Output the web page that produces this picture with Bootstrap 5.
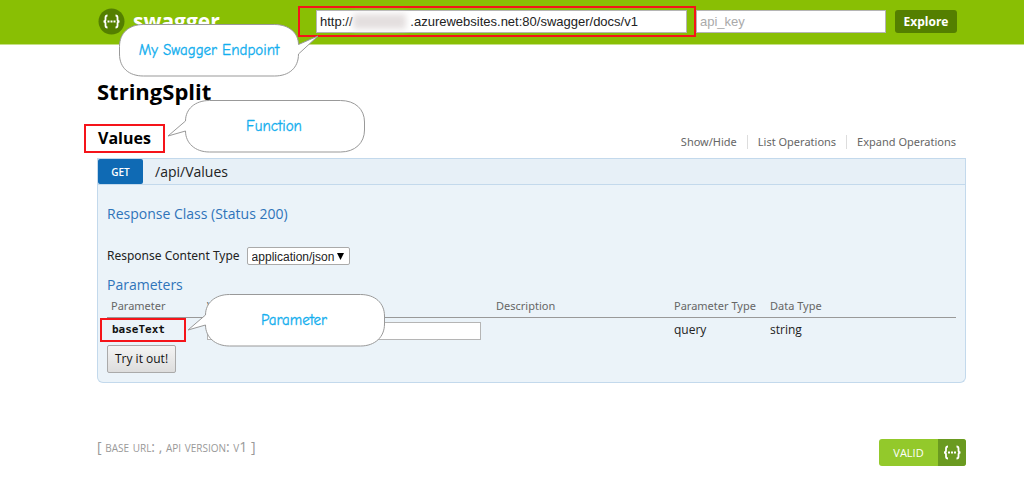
<!DOCTYPE html>
<html lang="en">
<head>
<meta charset="utf-8">
<meta name="viewport" content="width=device-width, initial-scale=1">
<title>Swagger UI</title>
<link href="https://cdn.jsdelivr.net/npm/bootstrap@5.3.0/dist/css/bootstrap.min.css" rel="stylesheet">
<style>
body { font-family: "Open Sans", "Noto Sans", sans-serif; font-size: 12px; line-height: 16px; color: #222; background: #fff; }
.page-gutter { padding-left: 97px; padding-right: 58px; }
.topbar { background: #89bf04; height: 45px; border-bottom: 1px solid #c5e085; padding-top: 6px; padding-right: 67px; }
.logo { color: #fff; font-size: 21px; line-height: 30px; font-weight: 700; text-decoration: none; width: 201px; gap: 8px; }
.logo svg { margin-left: 1px; }
.marked { border: 2px solid #f5141a; }
.url-box { padding: 2px 7px 2px 16px; width: 398px; height: 31px; }
.plain-input { font-family: "Liberation Sans", sans-serif; border: 1px solid #b5b5b5; border-radius: 0; background: #fff; color: #222; outline: 0; }
.topbar .plain-input { font-size: 13px; height: 23px; padding: 0 3px; min-width: 0; }
.plain-input::placeholder { color: #aaa; opacity: 1; }
.smudge { left: 53px; top: 6px; width: 53px; height: 15px; background: #e4dfdf; filter: blur(3px); }
.explore { margin-left: 9px; width: 62px; height: 23px; background: #547f00; color: #fff; border: 0; border-radius: 3px; font-size: 12px; font-weight: 700; line-height: 23px; padding: 0; }
h1 { font-size: 22px; line-height: 30px; font-weight: 700; color: #000; margin: 31px 0 18px; }
h2 { font-size: 16px; line-height: 24px; font-weight: 700; color: #000; margin: 0 0 0 -13px; padding: 0 12px; width: 81px; height: 29px; white-space: nowrap; }
.ops { margin-top: 6px; }
.ops a { font-family: "Noto Sans", sans-serif; color: #666; text-decoration: none; font-size: 11px; padding: 0 10px; line-height: 14px; border-left: 1px solid #ddd; }
.ops a:first-child { border: 0; }
.op-head { background: #e7f0f7; border: 1px solid #c3d9ec; height: 27px; margin-top: 5px; }
.verb { background: #0f6ab4; color: #fff; font-size: 10px; font-weight: 600; width: 45px; border-radius: 2px; }
.op-head a { color: #222; font-size: 14px; text-decoration: none; }
.op-body { background: #ebf3f9; border: 1px solid #c3d9ec; border-top: 0; border-radius: 0 0 6px 6px; padding: 19px 9px 9px; }
h3 { color: #2f74b9; font-size: 14px; line-height: 20px; font-weight: 400; margin: 0; }
.type-row { font-family: "Noto Sans", sans-serif; margin: 23px 0 10px; font-size: 12px; line-height: 18px; gap: 7px; }
.type-pick { font-family: "Liberation Sans", sans-serif; font-size: 12px; width: 103px; height: 18px; padding: 0 4px; border: 1px solid #aaa; border-radius: 2px; appearance: none; color: #222;
  background: #fff url("data:image/svg+xml,%3Csvg xmlns='http://www.w3.org/2000/svg' width='7' height='7'%3E%3Cpath d='M0 0h7L3.500 7z'/%3E%3C/svg%3E") no-repeat right 5px center; }
.params { table-layout: fixed; width: 100%; border-collapse: separate; border-spacing: 0; }
.params th { font-family: "Noto Sans", sans-serif; font-size: 11px; font-weight: 400; color: #666; padding: 3px 4px; line-height: 16px; border-bottom: 1px solid #999; white-space: nowrap; }
.params td { padding: 4px; height: 27px; line-height: 16px; vertical-align: top; }
.params .name-cell { padding: 0; }
.param-name { font-family: "DejaVu Sans Mono", monospace; font-size: 11px; font-weight: 700; margin-left: -7px; width: 86px; height: 24px; line-height: 20px; padding-left: 10px; color: #111; }
.params .plain-input { width: 274px; height: 18px; display: block; }
.try { border: 1px solid #aaa; border-radius: 2px; background: linear-gradient(#f4f4f4, #ddd); font-size: 12px; width: 69px; height: 28px; padding: 0; color: #111; white-space: nowrap; }
footer { margin-top: 56px; }
.api-info { font-size: 14px; line-height: 16px; font-variant: small-caps; color: #999; }
.valid { width: 87px; height: 27px; border-radius: 3px; overflow: hidden; background: #93c92b; color: #fff; text-decoration: none; font-size: 11px; }
.valid svg { background: #6a9a20; }
.callout { z-index: 5; pointer-events: none; }
.callout text { font-family: "Comic Sans MS", "Comic Neue", Lato, sans-serif; font-size: 15px; fill: #12aeee; stroke: #12aeee; stroke-width: .3px; text-anchor: middle; }
.callout path { fill: #fff; stroke: #999; }
.at-logo { left: 21px; top: 18px; }
.at-values { left: 69px; top: -25px; }
.at-param { left: 80px; top: -25px; }
</style>
</head>
<body>
<header class="topbar page-gutter d-flex align-items-start">
  <div class="position-relative flex-shrink-0">
    <a href="#" class="logo d-flex align-items-center">
      <svg width="27" height="27" viewBox="0 0 27 27"><circle cx="13.500" cy="13.500" r="13" fill="#547f00"/><g fill="none" stroke="#fff" stroke-width="1.800"><path d="M9.500 7.500Q7.500 7.500 7.500 9.500V11.500Q7.500 13.500 5.500 13.500Q7.500 13.500 7.500 15.500V17.500Q7.500 19.500 9.500 19.500M17.500 7.500Q19.500 7.500 19.500 9.500V11.500Q19.500 13.500 21.500 13.500Q19.500 13.500 19.500 15.500V17.500Q19.500 19.500 17.500 19.500"/><path d="M9.500 13.500h8" stroke-dasharray="2 1"/></g></svg>
      <span>swagger</span>
    </a>
    <svg class="callout at-logo position-absolute" width="202" height="54" viewBox="0 0 202 54"><path d="M25.500 .5H156.500C171 .5 180.500 9 180.500 20.500L200 12L180.500 30C180.500 44 171 52 156.500 52H25.500C11 52 1.500 44 1.500 30V22.500C1.500 9 11 .5 25.500 .5Z"/><text x="91" y="31">My Swagger Endpoint</text></svg>
  </div>
  <div class="url-box marked position-relative d-flex flex-shrink-1">
    <input class="plain-input flex-fill" type="text" aria-label="Swagger document URL" value="http://&nbsp;&nbsp;&nbsp;&nbsp;&nbsp;&nbsp;&nbsp;&nbsp;&nbsp;&nbsp;&nbsp;&nbsp;&nbsp;&nbsp;&nbsp;&nbsp;.azurewebsites.net:80/swagger/docs/v1">
    <span class="smudge position-absolute"></span>
  </div>
  <div class="d-flex flex-fill pt-1">
    <input class="plain-input flex-fill" type="text" aria-label="API key" placeholder="api_key">
    <button class="explore flex-shrink-0" type="button">Explore</button>
  </div>
</header>

<main class="page-gutter">
  <h1>StringSplit</h1>
  <div class="d-flex justify-content-between align-items-center">
    <div class="position-relative">
      <h2 class="marked">Values</h2>
      <svg class="callout at-values position-absolute" width="200" height="54" viewBox="0 0 200 54"><path d="M43.500 1.500H174.500C189 1.500 198.500 10 198.500 23V31C198.500 44 189 53 174.500 53H43.500C29 53 19.500 44 19.500 32L2 37L19.500 22C19.500 10 29 1.500 43.500 1.500Z"/><text x="108" y="32">Function</text></svg>
    </div>
    <nav class="ops d-flex"><a href="#">Show/Hide</a><a href="#">List Operations</a><a href="#">Expand Operations</a></nav>
  </div>

  <section>
    <div class="op-head d-flex">
      <span class="verb d-flex align-items-center justify-content-center">GET</span>
      <a href="#" class="d-flex align-items-center ps-2 ms-1">/api/Values</a>
    </div>
    <div class="op-body">
      <h3>Response Class (Status 200)</h3>
      <div class="type-row d-flex align-items-center">
        <label for="ctype">Response Content Type</label>
        <select id="ctype" class="type-pick"><option>application/json</option></select>
      </div>
      <h3>Parameters</h3>
      <table class="params">
        <colgroup><col style="width:96px"><col style="width:289px"><col style="width:178px"><col style="width:96px"><col></colgroup>
        <thead><tr><th>Parameter</th><th>Value</th><th>Description</th><th>Parameter Type</th><th>Data Type</th></tr></thead>
        <tbody><tr>
          <td class="name-cell"><div class="position-relative">
            <label for="base" class="param-name marked d-block">baseText</label>
            <svg class="callout at-param position-absolute" width="200" height="54" viewBox="0 0 200 54"><path d="M42.500 1.500H173.500C188 1.500 197.500 10 197.500 23V31C197.500 44 188 53 173.500 53H42.500C28 53 18.500 44 18.500 32L1 37L18.500 22C18.500 10 28 1.500 42.500 1.500Z"/><text x="107" y="32">Parameter</text></svg>
          </div></td>
          <td><input id="base" class="plain-input" type="text"></td>
          <td></td><td>query</td><td>string</td>
        </tr></tbody>
      </table>
      <button class="try" type="button">Try it out!</button>
    </div>
  </section>

  <footer class="d-flex justify-content-between align-items-start">
    <div class="api-info">[ base url: , api version: v1 ]</div>
    <a href="#" class="valid d-flex"><span class="flex-fill d-flex align-items-center justify-content-center">VALID</span>
      <svg width="28" height="27" viewBox="0 0 28 27"><g fill="none" stroke="#fff" stroke-width="1.800"><path d="M10 7.500Q8 7.500 8 9.500V11.500Q8 13.500 6 13.500Q8 13.500 8 15.500V17.500Q8 19.500 10 19.500M18.500 7.500Q20.500 7.500 20.500 9.500V11.500Q20.500 13.500 22.500 13.500Q20.500 13.500 20.500 15.500V17.500Q20.500 19.500 18.500 19.500"/><path d="M10 13.500h8" stroke-dasharray="2 1"/></g></svg>
    </a>
  </footer>
</main>
<script src="https://cdn.jsdelivr.net/npm/bootstrap@5.3.0/dist/js/bootstrap.bundle.min.js"></script>
</body>
</html>
